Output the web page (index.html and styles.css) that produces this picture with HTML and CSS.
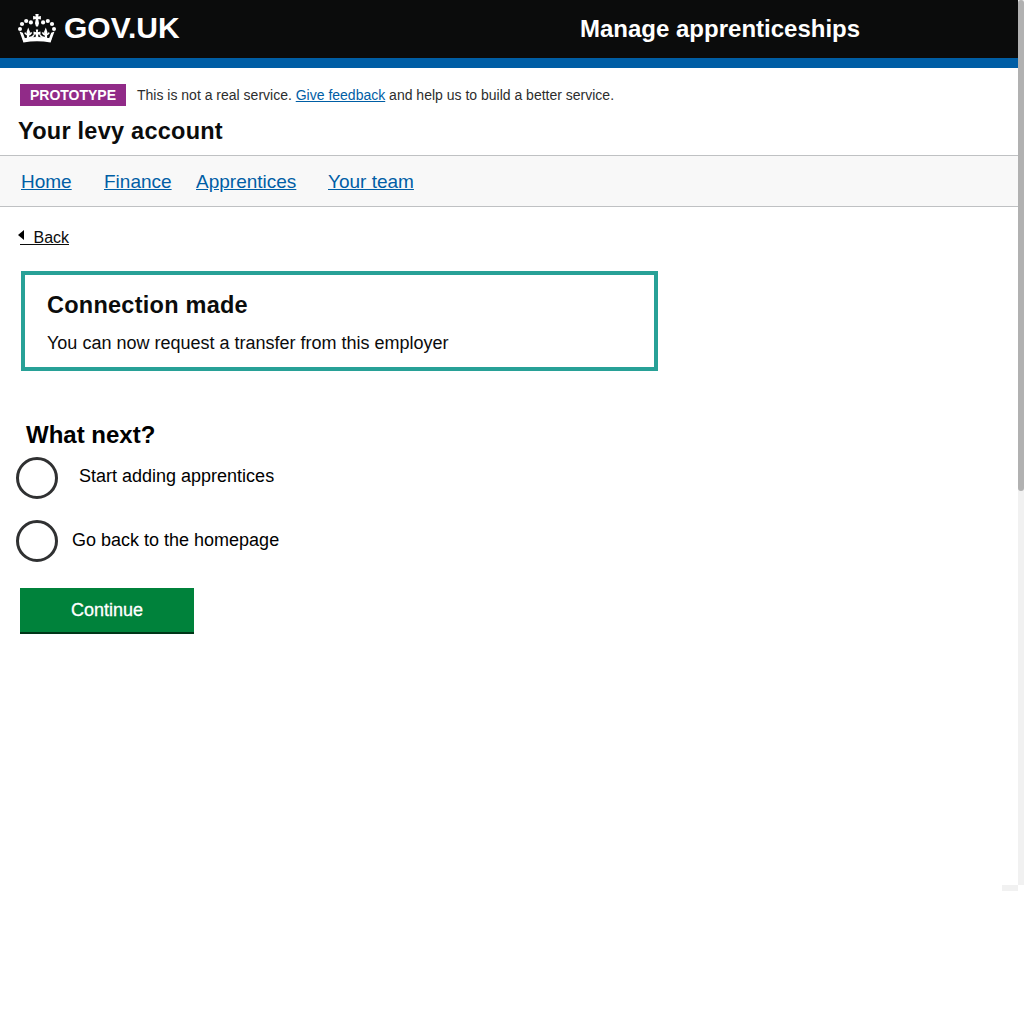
FILE: index.html
```html
<!DOCTYPE html>
<html lang="en">
<head>
<meta charset="utf-8">
<title>Manage apprenticeships</title>
<link rel="stylesheet" href="styles.css">
</head>
<body>
<div class="frame">
  <div class="page">
    <header class="header">
      <div class="logo">
        <svg class="crown" viewBox="0 0 38 30" width="38" height="30" fill="#fff">
          <path d="M17.300 0h3.400l-.5 2.600 2.700-.5v3.400l-2.700-.5.8 4.200-1 3.200h-2l-1-3.200.8-4.200-2.700.5V2.100l2.700.5z"/>
          <circle cx="12.900" cy="8.400" r="2.100"/><circle cx="8.200" cy="7" r="2.100"/><circle cx="4" cy="10" r="2.100"/><circle cx="2" cy="15" r="2"/>
          <circle cx="25.100" cy="8.400" r="2.100"/><circle cx="29.800" cy="7" r="2.100"/><circle cx="34" cy="10" r="2.100"/><circle cx="36" cy="15" r="2"/>
          <path d="M4.600 24.500Q19 21.600 33.400 24.500L32.500 28.400Q19 26.200 5.500 28.400z"/>
          <path d="M1.500 17.500L4.800 18.800 7 24.500 5.500 28.400zM36.500 17.500L33.200 18.800 31 24.500 32.500 28.400z"/>
          <path d="M10.200 13.500L12 18 10.800 24H9L8.600 18zM27.800 13.500L26 18l1.200 6H29l.4-6z"/>
          <path d="M17.800 15.500h2.400l-.4 2.700 2.700-.7v3.600l-2.500-.7.5 3h-3l.5-3-2.500.7v-3.600l2.700.7z"/>
          <path fill="none" stroke="#fff" stroke-width="1.600" d="M6.800 18.600Q8 20.800 10.200 20.600 12.500 20.800 13.600 18.400M31.200 18.600Q30 20.800 27.800 20.600 25.500 20.800 24.400 18.400M11 23.500Q14 23.800 16 21.200M27 23.500Q24 23.800 22 21.200"/>
        </svg>
        <span class="logo-text">GOV.UK</span>
      </div>
      <div class="service-name">Manage apprenticeships</div>
    </header>
    <div class="phase">
      <strong class="tag">PROTOTYPE</strong>
      <span>This is not a real service. <a class="link" href="#">Give feedback</a> and help us to build a better service.</span>
    </div>
    <div class="account">Your levy account</div>
    <nav class="nav">
      <a class="link nav-home" href="#">Home</a>
      <a class="link nav-finance" href="#">Finance</a>
      <a class="link nav-apprentices" href="#">Apprentices</a>
      <a class="link" href="#">Your team</a>
    </nav>
    <main class="main">
      <a class="back" href="#"><svg class="back-arrow" width="6" height="10" viewBox="0 0 6 10"><path d="M0 5L6 0v10z"/></svg><span class="back-text">Back</span></a>
      <section class="panel">
        <h1 class="panel-title">Connection made</h1>
        <p class="panel-body">You can now request a transfer from this employer</p>
      </section>
      <h2 class="question">What next?</h2>
      <div class="options">
        <label class="option option-start"><input class="radio" type="radio" name="next">Start adding apprentices</label>
        <label class="option option-home"><input class="radio" type="radio" name="next">Go back to the homepage</label>
      </div>
      <button class="button">Continue</button>
    </main>
    <div class="corner"></div>
  </div>
  <div class="scrollbar"><div class="thumb"></div></div>
</div>
</body>
</html>
```

FILE: styles.css
```css
* { box-sizing: border-box; }
body {
  margin: 0;
  background: #fff;
  color: #0b0c0c;
  font-family: "Liberation Sans", Arial, sans-serif;
}
h1, h2, p { margin: 0; }
.frame { display: flex; height: 891px; }
.page { display: flex; flex-direction: column; width: 1018px; }
.header {
  display: grid;
  grid-template-columns: 562px 1fr;
  height: 68px;
  padding: 0 0 0 18px;
  background: #0b0c0c;
  border-bottom: 10px solid #005ea5;
  color: #fff;
  font-weight: bold;
}
.logo { display: flex; align-items: flex-start; gap: 8px; padding-top: 13px; }
.crown { margin-top: .5px; }
.logo-text { font-size: 30px; line-height: 30px; }
.service-name { padding-top: 15px; font-size: 24px; line-height: 28px; }
.link { color: #005ea5; text-decoration: underline; }
.phase {
  display: flex;
  gap: 11px;
  height: 38px;
  padding: 16px 0 0 20px;
  font-size: 14px;
  line-height: 22px;
  color: #2c2d2d;
}
.tag {
  width: 106px;
  height: 22px;
  background: #912b88;
  color: #fff;
  text-align: center;
}
.account {
  height: 49px;
  padding: 11px 0 0 18px;
  font-size: 23.5px;
  line-height: 28px;
  font-weight: bold;
  letter-spacing: .25px;
}
.nav {
  display: flex;
  height: 52px;
  padding-left: 21px;
  background: #f8f8f8;
  border: solid #bfc1c3;
  border-width: 1px 0;
  font-size: 19px;
  line-height: 51px;
}
.nav-home { width: 83px; }
.nav-finance { width: 92px; }
.nav-apprentices { width: 132px; }
.nav .link { flex: none; }
.main { display: flex; flex-direction: column; align-items: flex-start; padding: 20px 0 0 16px; }
.back {
  display: flex;
  height: 44px;
  padding-left: 2px;
  color: #0b0c0c;
  font-size: 16px;
  line-height: 22px;
  text-decoration: none;
}
.back-arrow { margin-top: 3px; }
.back-text {
  height: 18px;
  margin-left: -4px;
  padding-left: 13.5px;
  border-bottom: 1px solid #0b0c0c;
}
.panel {
  width: 637px;
  height: 100px;
  margin-left: 5px;
  padding: 16px 22px;
  border: 4px solid #28a197;
}
.panel-title { font-size: 23.5px; line-height: 28px; letter-spacing: .25px; }
.panel-body { margin-top: 14px; font-size: 18px; line-height: 20px; }
.question { margin: 50px 0 8px 10px; font-size: 24px; line-height: 28px; color: #000; }
.options { display: flex; flex-direction: column; gap: 21px; }
.option { display: flex; font-size: 18px; line-height: 39px; height: 42px; color: #000; }
.option-start { gap: 21px; }
.option-home { gap: 14px; line-height: 41px; }
.radio {
  appearance: none;
  width: 42px;
  height: 42px;
  margin: 0;
  border: 3px solid #303132;
  border-radius: 50%;
  background: #fff;
}
.button {
  width: 174px;
  height: 46px;
  margin: 26px 0 0 4px;
  padding: 0;
  border: 0;
  border-bottom: 2px solid #003618;
  background: #00823b;
  color: #fff;
  font: 18px/44px "Liberation Sans", Arial, sans-serif;
  -webkit-text-stroke: .3px #fff;
}
.corner { width: 16px; height: 6px; margin: auto 0 0 auto; background: #f1f1f1; }
.scrollbar { width: 6px; height: 885px; background: #f1f1f1; }
.thumb { height: 491px; background: #b1b1b1; border-radius: 3px; }
```
